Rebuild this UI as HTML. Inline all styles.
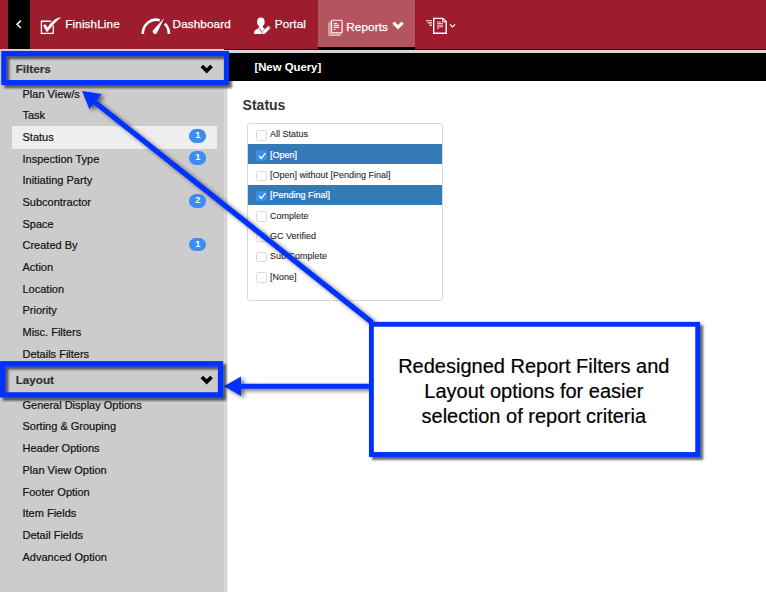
<!DOCTYPE html>
<html><head><meta charset="utf-8"><title>Reports</title>
<style>
html,body{margin:0;padding:0;}
body{width:766px;height:592px;position:relative;overflow:hidden;background:#fff;font-family:"Liberation Sans",Arial,sans-serif;color:#222;}
.abs{position:absolute;}
#hdr{left:0;top:0;width:766px;height:49px;background:#9d1c2e;}
#hdl{left:224px;top:49px;width:542px;height:1px;background:#3a0810;}
#blk{left:8px;top:0;width:22px;height:49px;background:#000;}
#tab{left:317.5px;top:0;width:97.5px;height:47px;background:#b4545f;}
#tabu{left:317.5px;top:47px;width:97.5px;height:3px;background:#000;}
#gl{left:224px;top:50px;width:542px;height:3px;background:#d4d7d7;}
#bar{left:0;top:53px;width:766px;height:27.5px;background:#000;}
.nav{color:#fff;font-size:11.7px;letter-spacing:0.12px;line-height:14px;white-space:nowrap;-webkit-text-stroke:0.25px #fff;}
#side{left:0;top:49px;width:224px;height:543px;background:#ccc;border-top:1px solid #d8d2d2;box-sizing:border-box;}
#sideb{left:223.7px;top:80.5px;width:5px;height:512px;background:linear-gradient(to right,#dcdcdc 0,#dcdcdc 1.4px,#c8c8c8 1.6px,#d4d4d4 2.4px,#f0f0f0 3.4px,#fff 4.4px);}
.dot{width:1.2px;height:1.2px;background:#e4e4e4;border-radius:1px;}
.sh{font-weight:bold;-webkit-text-stroke:0.2px #333;font-size:11.7px;line-height:14px;color:#333;white-space:nowrap;}
.it{left:11.8px;width:205.2px;height:22px;line-height:22px;font-size:11px;color:#111;-webkit-text-stroke:0.2px #111;white-space:nowrap;box-sizing:border-box;padding-left:10.7px;}
#selbg{left:11.8px;top:125.9px;width:205.2px;height:22.9px;background:#eee;}
.bd{width:16.7px;height:13.5px;border-radius:6.75px;background:#3d8bf5;color:#fff;font-size:9.3px;font-weight:bold;line-height:13.7px;text-align:center;left:189.4px;}
#q{left:254.4px;top:60.1px;color:#fff;font-weight:bold;font-size:11.35px;line-height:14px;white-space:nowrap;}
#st{left:242.6px;top:96.5px;font-weight:bold;font-size:14px;line-height:16px;color:#333;}
#lb{left:247px;top:122.5px;width:196px;height:178.5px;border:1px solid #d9d9d9;border-radius:3px;box-sizing:border-box;background:#fff;}
.r{left:248px;width:194px;height:20.3px;font-size:9px;line-height:20.3px;color:#2a2a2a;-webkit-text-stroke:0.1px #2a2a2a;white-space:nowrap;}
.r span{position:absolute;left:22px;top:0.9px;}
.r.on{background:#337ab7;color:#fff;-webkit-text-stroke:0.2px #fff;}
.cb{position:absolute;left:8.4px;top:6.6px;width:10.4px;height:10.4px;border:1px solid #d9d9d9;border-radius:2.5px;background:#fff;box-sizing:border-box;}
.on .cb{background:#3b8cf0;border-color:#3b8cf0;}
#ct{left:373.3px;-webkit-text-stroke:0.2px #000;top:354px;width:321px;text-align:center;font-size:20px;line-height:24.8px;color:#000;}
</style></head><body>

<div id="hdr" class="abs"></div><div id="hdl" class="abs"></div><div id="blk" class="abs"></div><div id="tab" class="abs"></div><div id="tabu" class="abs"></div>
<div id="gl" class="abs"></div><div id="bar" class="abs"></div>
<div id="side" class="abs"></div><div id="sideb" class="abs"></div>
<div class="abs dot" style="left:11.5px;top:566.8px"></div><div class="abs dot" style="left:215.2px;top:566.8px"></div>
<div class="abs nav" style="left:65.3px;top:17.40px">FinishLine</div>
<div class="abs nav" style="left:172.6px;top:17.40px">Dashboard</div>
<div class="abs nav" style="left:274.8px;top:17.40px">Portal</div>
<div class="abs nav" style="left:346.3px;top:19.70px">Reports</div>
<div id="q" class="abs">[New Query]</div>
<div id="selbg" class="abs"></div>
<div class="abs sh" style="left:15.7px;top:61.6px">Filters</div>
<div class="abs sh" style="left:15.7px;top:372.7px">Layout</div>
<div class="abs it" style="top:82.60px">Plan View/s</div>
<div class="abs it" style="top:104.27px">Task</div>
<div class="abs it" style="top:125.94px">Status</div>
<div class="abs bd" style="top:129.34px">1</div>
<div class="abs it" style="top:147.61px">Inspection Type</div>
<div class="abs bd" style="top:151.01px">1</div>
<div class="abs it" style="top:169.28px">Initiating Party</div>
<div class="abs it" style="top:190.95px">Subcontractor</div>
<div class="abs bd" style="top:194.35px">2</div>
<div class="abs it" style="top:212.62px">Space</div>
<div class="abs it" style="top:234.29px">Created By</div>
<div class="abs bd" style="top:237.69px">1</div>
<div class="abs it" style="top:255.96px">Action</div>
<div class="abs it" style="top:277.63px">Location</div>
<div class="abs it" style="top:299.30px">Priority</div>
<div class="abs it" style="top:320.97px">Misc. Filters</div>
<div class="abs it" style="top:342.64px">Details Filters</div>
<div class="abs it" style="top:393.80px">General Display Options</div>
<div class="abs it" style="top:415.48px">Sorting &amp; Grouping</div>
<div class="abs it" style="top:437.16px">Header Options</div>
<div class="abs it" style="top:458.84px">Plan View Option</div>
<div class="abs it" style="top:480.52px">Footer Option</div>
<div class="abs it" style="top:502.20px">Item Fields</div>
<div class="abs it" style="top:523.88px">Detail Fields</div>
<div class="abs it" style="top:545.56px">Advanced Option</div>
<div id="st" class="abs">Status</div>
<div id="lb" class="abs"></div>
<div class="abs r" style="top:123.60px"><i class="cb"></i><span>All Status</span></div>
<div class="abs r on" style="top:143.90px"><i class="cb"></i><svg class="abs" style="left:8.5px;top:6.8px" width="10.2" height="10.2" viewBox="0 0 10 10"><path d="M2.3 5.2 L4.3 7.3 L7.8 2.6" fill="none" stroke="#fff" stroke-width="1.3" stroke-linecap="round" stroke-linejoin="round"/></svg><span>[Open]</span></div>
<div class="abs r" style="top:164.20px"><i class="cb"></i><span>[Open] without [Pending Final]</span></div>
<div class="abs r on" style="top:184.50px"><i class="cb"></i><svg class="abs" style="left:8.5px;top:6.8px" width="10.2" height="10.2" viewBox="0 0 10 10"><path d="M2.3 5.2 L4.3 7.3 L7.8 2.6" fill="none" stroke="#fff" stroke-width="1.3" stroke-linecap="round" stroke-linejoin="round"/></svg><span>[Pending Final]</span></div>
<div class="abs r" style="top:204.80px"><i class="cb"></i><span>Complete</span></div>
<div class="abs r" style="top:225.10px"><i class="cb"></i><span>GC Verified</span></div>
<div class="abs r" style="top:245.40px"><i class="cb"></i><span>Sub Complete</span></div>
<div class="abs r" style="top:265.70px"><i class="cb"></i><span>[None]</span></div>
<svg class="abs" style="left:0;top:0" width="766" height="592" viewBox="0 0 766 592">
<defs><filter id="ds" x="-5%" y="-5%" width="110%" height="110%"><feGaussianBlur in="SourceAlpha" stdDeviation="0.9"/><feOffset dx="2.5" dy="2.5" result="o"/><feComponentTransfer><feFuncA type="linear" slope="0.6"/></feComponentTransfer><feMerge><feMergeNode/><feMergeNode in="SourceGraphic"/></feMerge></filter><filter id="dsa" x="-5%" y="-5%" width="110%" height="110%"><feGaussianBlur in="SourceAlpha" stdDeviation="2.0"/><feOffset dx="2.6" dy="2.3" result="o"/><feComponentTransfer><feFuncA type="linear" slope="0.58"/></feComponentTransfer><feMerge><feMergeNode/><feMergeNode in="SourceGraphic"/></feMerge></filter></defs>
<g fill="none" stroke="#fff">
<path d="M20.9 20.6 L17 24.3 L20.9 28" stroke-width="1.5"/>
<path d="M51 21.25 H41.4 V33.3 H53.25 V25.4" stroke-width="1.3"/>
</g>
<path d="M42.9 25.3 L45.5 24.3 L47.7 27.4 C50.2 23 53.8 19.4 57.5 17.9 L61.3 17.2 C57 20.3 52 25.7 47.5 31.7 L46.5 31.7 Z" fill="#fff"/>
<path d="M142.75 34.00 A13.1 14.3 0 0 1 159.79 20.36" fill="none" stroke="#fff" stroke-width="2.6"/>
<path d="M164.78 23.54 A13.1 14.3 0 0 1 168.95 34.00" fill="none" stroke="#fff" stroke-width="2.6"/>
<path d="M164.3 18 L157.2 32.4 A2 2 0 0 1 152.8 30.6 Z" fill="#fff"/>
<ellipse cx="260.9" cy="21.9" rx="3.75" ry="4.3" fill="#fff"/>
<path d="M254.1 33.9 C253.9 30.6 255.2 29.8 258.6 28.3 L259.2 25.5 L262.8 25.5 L263.2 28.1 C264.6 28.6 265.4 29 266 29.4 L261.6 33.9 Z" fill="#fff"/>
<path d="M261.8 34.5 L262.4 31.5 L268.4 25.5 L270.9 28 L264.9 33.9 Z" fill="#fff" stroke="#9d1c2e" stroke-width="0.6"/>
<path d="M259.7 28.6 L261.4 31.8" stroke="#9d1c2e" stroke-width="0.8"/>
<path d="M267.2 26.6 L269.6 29" stroke="#9d1c2e" stroke-width="0.5"/>
<g fill="none" stroke="#fff" stroke-width="1.05">
<path d="M329.3 22.5 Q328.9 22.5 328.9 23 V35.4 H339.9 V34.6" stroke-width="0.7"/>
<path d="M330.5 21.3 Q330.15 21.3 330.15 21.8 V34.1 H341.2 V33.3" stroke-width="0.7"/>
<rect x="331.6" y="20.25" width="10.5" height="12.5" rx="0.7" stroke-width="1.15"/>
</g>
<g stroke="#fff" stroke-width="1.1" opacity="0.9"><path d="M333.6 23.4 H337.3 M333.6 25.4 H339.1 M333.6 27.4 H339.1 M333.6 29.4 H335.3"/></g>
<path d="M393.4 22.6 L398 27.2 L402.7 22.6" fill="none" stroke="#fff" stroke-width="3.1"/>
<g stroke="#fff" fill="none"><path d="M426 20.7 H432 M427.6 22.9 H432 M429.2 25.1 H432" stroke-width="1.1" opacity="0.9"/>
<path d="M433.7 18.4 H442.8 L446.2 21.8 V33.3 H433.7 Z" stroke-width="1.4"/>
<path d="M442.6 18.6 V22 H446" stroke-width="0.9"/>
<path d="M437 22 H441 M437 23.6 H443 M437 25.2 H443 M437 26.8 H443 M437 28.4 H439" stroke-width="0.9" opacity="0.85"/>
<path d="M450 24.3 L452.5 26.9 L455.1 24.3" stroke-width="1.2"/></g>
<path d="M201.85 65.95 L206.70 70.80 L211.55 65.95" fill="none" stroke="#000" stroke-width="3.7"/>
<path d="M201.85 377.05 L206.70 381.90 L211.55 377.05" fill="none" stroke="#000" stroke-width="3.7"/>
<g filter="url(#dsa)" fill="none" stroke="#0433ff">
<path d="M372.2 322.6 L94 101.5" stroke-width="5.2"/>
<path d="M371.4 386.3 H238" stroke-width="5"/>
<path d="M82.1 90.9 L101.7 94 L89.4 109.2 Z" fill="#0433ff" stroke="none"/>
<path d="M223.9 386.3 L241 376.6 V396.1 Z" fill="#0433ff" stroke="none"/>
</g>
<g filter="url(#ds)" fill="none" stroke="#0433ff">
<rect x="3.8" y="53.55" width="222.6" height="29.0" stroke-width="5.1"/>
<rect x="2.6" y="363.8" width="217.9" height="31.1" stroke-width="5.4"/>
<rect x="371.4" y="324.3" width="326.3" height="130.2" stroke-width="4.9" fill="#fff"/>
</g>
</svg>
<div id="ct" class="abs">Redesigned Report Filters and<br>Layout options for easier<br>selection of report criteria</div>
</body></html>
